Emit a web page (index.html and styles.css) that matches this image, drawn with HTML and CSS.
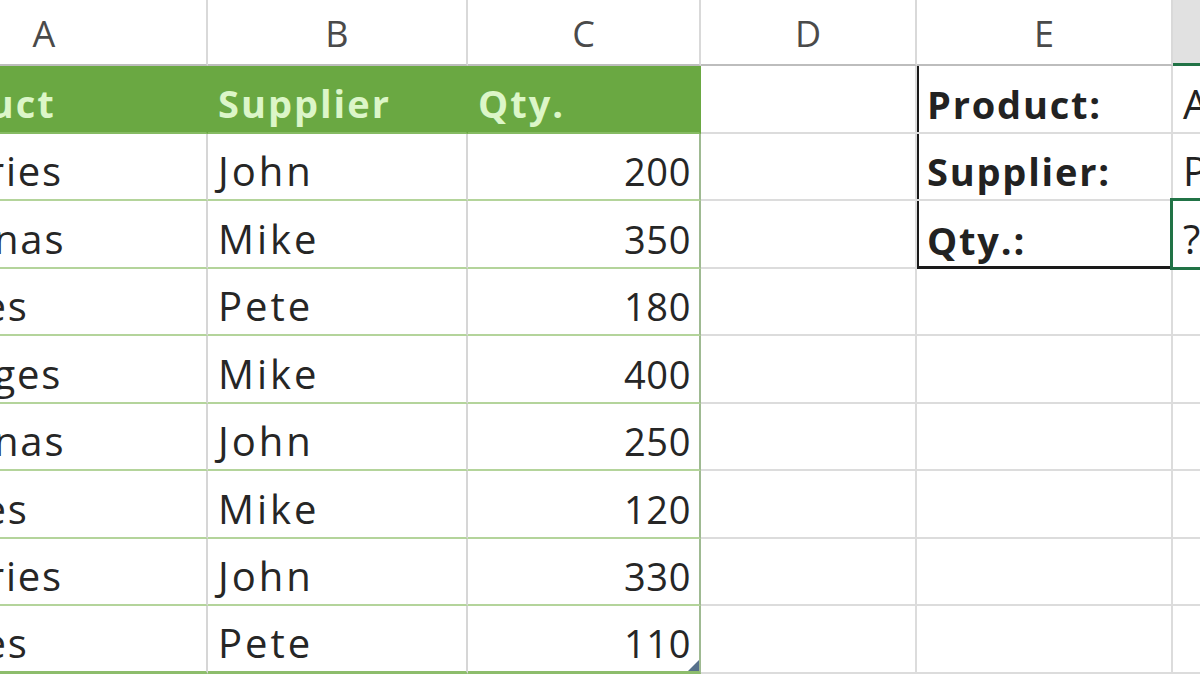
FILE: index.html
```html
<!DOCTYPE html>
<html>
<head>
<meta charset="utf-8">
<link rel="stylesheet" href="styles.css">
</head>
<body>
<div class="sheet">
  <div class="ch">A</div><div class="ch">B</div><div class="ch">C</div><div class="ch">D</div><div class="ch">E</div><div class="ch ch-sel"></div>

  <div class="c th">Product</div><div class="c th">Supplier</div><div class="c th th-last">Qty.</div><div class="c"></div><div class="c lbl box-l box-t">Product:</div><div class="c val">Apples</div>

  <div class="c td pa">Cherries</div><div class="c td">John</div><div class="c td num">200</div><div class="c"></div><div class="c lbl box-l">Supplier:</div><div class="c val">Pete</div>

  <div class="c td pa">Bananas</div><div class="c td">Mike</div><div class="c td num">350</div><div class="c"></div><div class="c lbl box-l box-b">Qty.:</div><div class="c val sel">?</div>

  <div class="c td pa">Apples</div><div class="c td">Pete</div><div class="c td num">180</div><div class="c"></div><div class="c"></div><div class="c"></div>

  <div class="c td pa">Oranges</div><div class="c td">Mike</div><div class="c td num">400</div><div class="c"></div><div class="c"></div><div class="c"></div>

  <div class="c td pa">Bananas</div><div class="c td">John</div><div class="c td num">250</div><div class="c"></div><div class="c"></div><div class="c"></div>

  <div class="c td pa">Apples</div><div class="c td">Mike</div><div class="c td num">120</div><div class="c"></div><div class="c"></div><div class="c"></div>

  <div class="c td pa">Cherries</div><div class="c td">John</div><div class="c td num">330</div><div class="c"></div><div class="c"></div><div class="c"></div>

  <div class="c td pa last">Apples</div><div class="c td last">Pete</div><div class="c td num last corner">110</div><div class="c"></div><div class="c"></div><div class="c"></div>
</div>
</body>
</html>
```
FILE: styles.css
```css
html, body {
  margin: 0;
  padding: 0;
  background: #ffffff;
  overflow: hidden;
}
body {
  width: 1200px;
  height: 675px;
  font-family: "Open Sans", "Liberation Sans", sans-serif;
  color: #262626;
}
.sheet {
  display: grid;
  grid-template-columns: 326px 260px 233px 216px 256px 160px;
  grid-template-rows: 66px repeat(9, 67.5px);
  margin-left: -118px;
  width: 1251px;
}
.ch {
  box-sizing: border-box;
  display: flex;
  align-items: center;
  justify-content: center;
  font-size: 36px;
  color: #4a4a4a;
  background: #ffffff;
  border-right: 2px solid #d9d9d9;
  border-bottom: 2px solid #bdbdbd;
  padding-top: 2px;
}
.ch-sel {
  background: #e1e1e1;
  border-bottom: 3px solid #217346;
}
.c {
  box-sizing: border-box;
  display: flex;
  align-items: flex-end;
  padding: 0 10px 8px 10px;
  font-size: 40px;
  letter-spacing: 3px;
  line-height: 1;
  white-space: nowrap;
  overflow: hidden;
  border-right: 2px solid #dcdcdc;
  border-bottom: 2px solid #dcdcdc;
}
.th {
  background: #6aa842;
  color: #dcf6c8;
  font-weight: 700;
  font-size: 38px;
  letter-spacing: 2px;
  padding-bottom: 10px;
  border-right-color: #6aa842;
  border-bottom: 2px solid #86bb63;
}
.th-last {
  border-right-color: #6aa842;
}
.td {
  border-bottom: 2px solid #b4d49b;
  border-right-color: #d6d6d6;
}
.td.pa {
  letter-spacing: 1.8px;
}
.td.num {
  justify-content: flex-end;
  font-size: 38px;
  letter-spacing: 0.6px;
  padding-right: 8px;
  padding-bottom: 9px;
  border-right: 2px solid #9fba92;
}
.td.last {
  border-bottom: 3px solid #8dbd6c;
}
.corner {
  position: relative;
}
.corner::after {
  content: "";
  position: absolute;
  right: 0;
  bottom: 0;
  width: 0;
  height: 0;
  border-left: 11px solid transparent;
  border-bottom: 11px solid #56708a;
}
.lbl {
  font-weight: 700;
  font-size: 38px;
  letter-spacing: 1.8px;
  padding-bottom: 9px;
  color: #222;
}
.box-l {
  box-shadow: inset 2px 0 0 #1a1a1a;
}
.box-t {
  box-shadow: inset 2px 0 0 #1a1a1a;
}
.box-b {
  box-shadow: inset 2px 0 0 #1a1a1a, inset 0 -2px 0 #1a1a1a;
  border-bottom-color: #1a1a1a;
  border-bottom-width: 1px;
}
.val {
  color: #222;
}
.sel {
  position: relative;
  overflow: visible;
}
.sel::after {
  content: "";
  position: absolute;
  left: -3px;
  top: -3px;
  right: -3px;
  bottom: -3px;
  border: 3px solid #217346;
}
```
